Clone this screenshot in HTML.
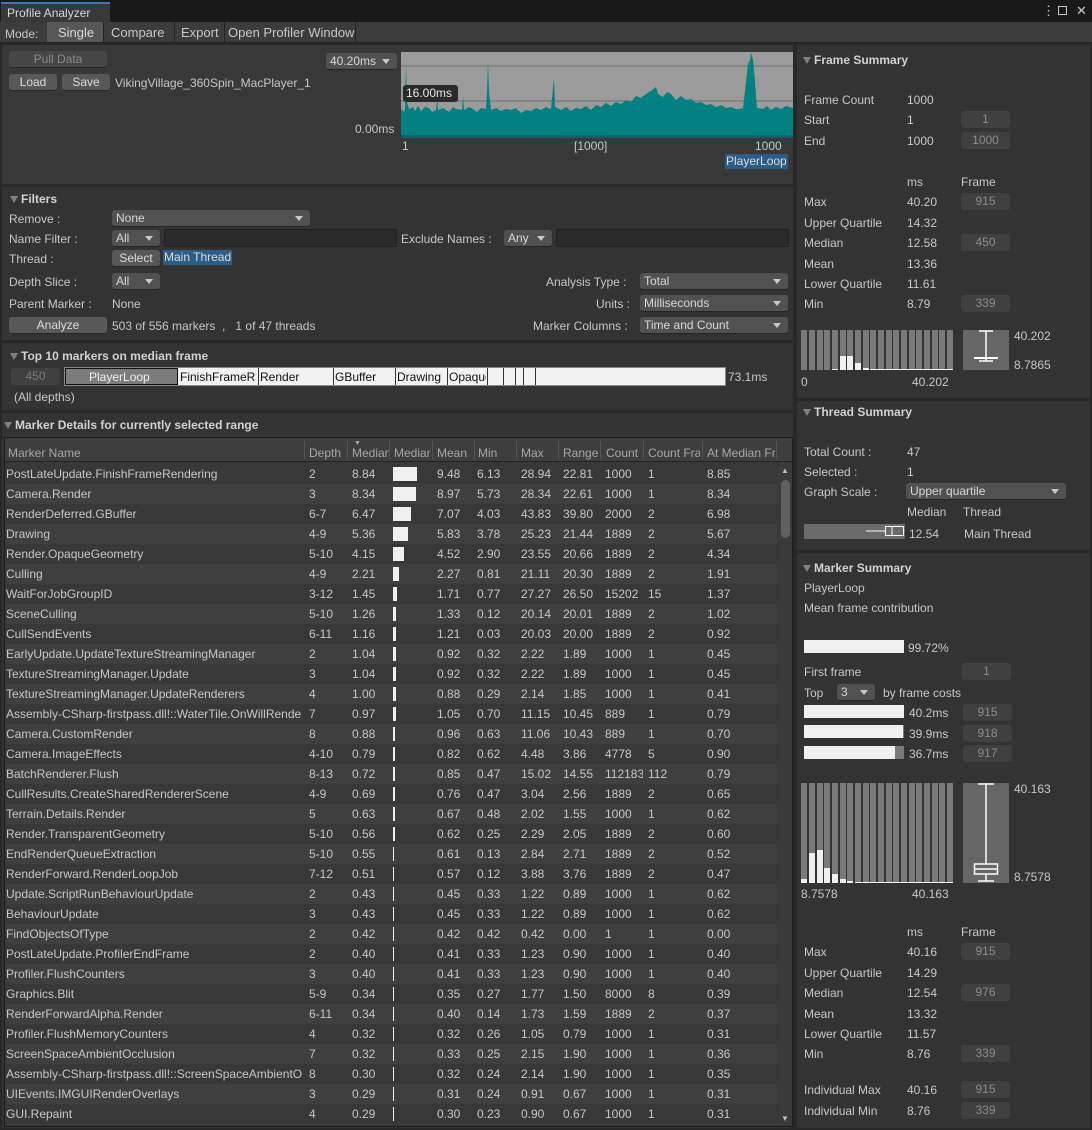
<!DOCTYPE html>
<html><head><meta charset="utf-8"><style>
*{margin:0;padding:0;box-sizing:border-box}
body{width:1092px;height:1130px;background:#282828;font-family:"Liberation Sans",sans-serif;font-size:12px;color:#c8c8c8;position:relative;overflow:hidden}
.a{position:absolute;white-space:nowrap;line-height:14px}
.box{position:absolute}
.sec{position:absolute;background:#333333}
.btn{position:absolute;background:#585858;border-radius:3px;color:#dcdcdc;text-align:center;line-height:16px;height:17px;border-bottom:1px solid #242424}
.dd{position:absolute;background:#515151;border-radius:3px;color:#d8d8d8;line-height:16px;height:17px;padding-left:4px;border-bottom:1px solid #242424}
.dd:after{content:"";position:absolute;right:7px;top:6px;border-left:4px solid transparent;border-right:4px solid transparent;border-top:5px solid #c8c8c8}
.tf{position:absolute;background:#2a2a2a;border:1px solid #212121;border-radius:2px;height:18px}
.fb{position:absolute;background:#404040;border-radius:3px;color:#8c8c8c;text-align:center;line-height:16px;height:17px;width:49px}
.hd{position:absolute;font-weight:bold;color:#d2d2d2;line-height:14px;white-space:nowrap}
.hd:before{content:"";display:inline-block;border-left:4px solid transparent;border-right:4px solid transparent;border-top:7px solid #808080;margin-right:3px;vertical-align:0}
.r{position:absolute;left:6px;width:771px;height:20px;line-height:20px}
.r:nth-child(odd){background:#383838}
.r:nth-child(even){background:#3f3f3f}
.r i{font-style:normal;position:absolute;top:0;overflow:hidden;white-space:nowrap}
.r b{position:absolute;top:3px;height:14px;background:#f0f0f0;left:387px}
.c0{left:0;width:296px}.c1{left:303px;width:40px}.c2{left:346px;width:40px}.c3{left:431px;width:40px}.c4{left:471px;width:40px}.c5{left:515px;width:40px}.c6{left:557px;width:40px}.c7{left:599px;width:38px}.c8{left:642px;width:52px}.c9{left:701px;width:70px}
</style></head><body>

<!-- title bar -->
<div class="box" style="left:0;top:0;width:1092px;height:22px;background:#191919"></div>
<div class="box" style="left:1px;top:2px;width:109px;height:20px;background:#383838;border-top:2px solid #3a79bb"></div>
<div class="a" style="left:7px;top:6px;color:#d8d8d8">Profile Analyzer</div>
<div class="a" style="left:1042px;top:4px;color:#c8c8c8;font-size:13px">⋮</div>
<div class="box" style="left:1058px;top:6px;width:9px;height:9px;border:1px solid #c8c8c8"></div>
<div class="a" style="left:1076px;top:4px;color:#c8c8c8;font-size:13px">✕</div>

<!-- toolbar -->
<div class="box" style="left:0;top:22px;width:1092px;height:21px;background:#3c3c3c;border-bottom:1px solid #232323"></div>
<div class="a" style="left:5px;top:27px;color:#c8c8c8">Mode:</div>
<div class="box" style="left:47px;top:22px;width:57px;height:20px;background:#575757;border-right:1px solid #232323"></div>
<div class="a" style="left:58px;top:26px;color:#d8d8d8;font-size:13px">Single</div>
<div class="box" style="left:104px;top:22px;width:71px;height:20px;border-right:1px solid #232323"></div>
<div class="a" style="left:111px;top:26px;font-size:13px">Compare</div>
<div class="box" style="left:175px;top:22px;width:50px;height:20px;border-right:1px solid #232323"></div>
<div class="a" style="left:181px;top:26px;font-size:13px">Export</div>
<div class="box" style="left:225px;top:22px;width:131px;height:20px;border-right:1px solid #232323"></div>
<div class="a" style="left:228px;top:26px;font-size:13px">Open Profiler Window</div>

<!-- left sections -->
<div class="sec" style="left:2px;top:45px;width:791px;height:139px;background:#383838"></div>
<div class="sec" style="left:2px;top:187px;width:791px;height:153px"></div>
<div class="sec" style="left:2px;top:343px;width:791px;height:67px"></div>
<div class="sec" style="left:2px;top:413px;width:791px;height:715px"></div>

<!-- top section -->
<div class="btn" style="left:9px;top:51px;width:98px;background:#464646;color:#8a8a8a">Pull Data</div>
<div class="btn" style="left:9px;top:74px;width:48px">Load</div>
<div class="btn" style="left:62px;top:74px;width:48px">Save</div>
<div class="a" style="left:115px;top:76px;color:#c8c8c8;width:198px;overflow:hidden">VikingVillage_360Spin_MacPlayer_1</div>
<div class="dd" style="left:326px;top:53px;width:71px">40.20ms</div>
<div class="a" style="left:355px;top:122px">0.00ms</div>
<svg class="box" style="left:401px;top:52px" width="392" height="86" viewBox="0 0 392 86">
<rect width="392" height="86" fill="#9b9b9b"/>
<line x1="0" y1="14" x2="392" y2="14" stroke="#6c6c6c"/>
<line x1="0" y1="49" x2="392" y2="49" stroke="#6c6c6c"/>
<path fill="#008080" d="M0,86 L0,57 L3,60 L4,56 L5,14 L6,50 L8,57 L12,55 L14,59 L17,54 L20,59 L24,55 L28,56 L31,60 L35,58 L36,48 L37,58 L42,56 L48,60 L52,55 L55,57 L61,58 L62,44 L63,58 L68,55 L72,57 L76,60 L80,56 L85,57 L86,40 L87,12 L88,40 L90,58 L95,56 L100,59 L105,57 L110,58 L115,56 L120,61 L125,58 L130,59 L135,56 L140,58 L145,55 L150,57 L153,26 L154,55 L160,58 L165,55 L170,59 L175,56 L180,57 L185,54 L190,58 L195,53 L200,55 L205,51 L210,54 L215,50 L220,52 L225,48 L230,50 L235,44 L240,46 L245,42 L250,39 L255,35 L257,42 L262,45 L266,40 L270,42 L275,48 L280,44 L285,48 L290,47 L295,51 L300,50 L305,53 L310,52 L315,55 L320,53 L325,56 L330,55 L335,57 L338,57 L342,56 L345,30 L347,12 L349,8 L350,0 L352,8 L354,30 L356,56 L362,57 L366,54 L370,58 L375,55 L380,57 L385,54 L392,56 L392,86 Z"/>
<rect y="83" width="392" height="3" fill="#006868"/>
<rect x="2" y="33" width="55" height="17" rx="3" fill="#2a2a2a"/>
<text x="5" y="45" font-family="Liberation Sans" font-size="12" fill="#e8e8e8">16.00ms</text>
</svg>
<div class="a" style="left:402px;top:139px">1</div>
<div class="a" style="left:574px;top:139px">[1000]</div>
<div class="a" style="left:755px;top:139px">1000</div>
<div class="a" style="left:725px;top:154px;background:#2c5d87;color:#dcdcdc;padding:0 1px;line-height:15px">PlayerLoop</div>

<!-- Filters -->
<div class="hd" style="left:10px;top:192px">Filters</div>
<div class="a" style="left:9px;top:212px">Remove :</div>
<div class="dd" style="left:112px;top:210px;width:198px">None</div>
<div class="a" style="left:9px;top:232px">Name Filter :</div>
<div class="dd" style="left:112px;top:230px;width:48px">All</div>
<div class="tf" style="left:164px;top:229px;width:233px"></div>
<div class="a" style="left:401px;top:232px">Exclude Names :</div>
<div class="dd" style="left:504px;top:230px;width:48px">Any</div>
<div class="tf" style="left:556px;top:229px;width:233px"></div>
<div class="a" style="left:9px;top:252px">Thread :</div>
<div class="btn" style="left:112px;top:250px;width:48px">Select</div>
<div class="a" style="left:163px;top:250px;background:#2c5d87;color:#dcdcdc;padding:0 1px;line-height:15px">Main Thread</div>
<div class="a" style="left:9px;top:275px">Depth Slice :</div>
<div class="dd" style="left:112px;top:273px;width:48px">All</div>
<div class="a" style="left:546px;top:275px">Analysis Type :</div>
<div class="dd" style="left:640px;top:273px;width:148px">Total</div>
<div class="a" style="left:9px;top:297px">Parent Marker :</div>
<div class="a" style="left:112px;top:297px">None</div>
<div class="a" style="left:596px;top:297px">Units :</div>
<div class="dd" style="left:640px;top:295px;width:148px">Milliseconds</div>
<div class="btn" style="left:9px;top:317px;width:98px">Analyze</div>
<div class="a" style="left:112px;top:319px">503 of 556 markers &nbsp;, &nbsp; 1 of 47 threads</div>
<div class="a" style="left:533px;top:319px">Marker Columns :</div>
<div class="dd" style="left:640px;top:317px;width:148px">Time and Count</div>

<!-- Top 10 -->
<div class="hd" style="left:10px;top:349px">Top 10 markers on median frame</div>
<div class="fb" style="left:11px;top:368px;color:#7a7a7a">450</div>
<div class="box" style="left:64px;top:367px;width:662px;height:19px;background:#f2f2f2;border:1px solid #8a8a8a"></div>
<div class="box" style="left:65px;top:368px;width:113px;height:17px;background:#7c7c7c;border:1px solid #111"></div>
<div class="a" style="left:89px;top:370px;color:#f0f0f0">PlayerLoop</div>
<div class="a" style="left:180px;top:370px;color:#111;width:77px;overflow:hidden">FinishFrameR</div>
<div class="box" style="left:258px;top:368px;width:1px;height:17px;background:#333"></div>
<div class="a" style="left:260px;top:370px;color:#111">Render</div>
<div class="box" style="left:333px;top:368px;width:1px;height:17px;background:#333"></div>
<div class="a" style="left:335px;top:370px;color:#111">GBuffer</div>
<div class="box" style="left:395px;top:368px;width:1px;height:17px;background:#333"></div>
<div class="a" style="left:397px;top:370px;color:#111">Drawing</div>
<div class="box" style="left:447px;top:368px;width:1px;height:17px;background:#333"></div>
<div class="a" style="left:449px;top:370px;color:#111;width:37px;overflow:hidden">Opaque</div>
<div class="box" style="left:487px;top:368px;width:1px;height:17px;background:#333"></div>
<div class="box" style="left:503px;top:368px;width:1px;height:17px;background:#333"></div>
<div class="box" style="left:515px;top:368px;width:1px;height:17px;background:#333"></div>
<div class="box" style="left:523px;top:368px;width:1px;height:17px;background:#333"></div>
<div class="box" style="left:535px;top:368px;width:1px;height:17px;background:#333"></div>
<div class="a" style="left:728px;top:370px">73.1ms</div>
<div class="a" style="left:14px;top:390px">(All depths)</div>

<!-- Marker details -->
<div class="hd" style="left:4px;top:418px">Marker Details for currently selected range</div>
<div class="box" style="left:4px;top:437px;width:789px;height:690px;background:#383838;border:1px solid #1c1c1c"></div>
<div class="box" style="left:5px;top:438px;width:787px;height:24px;background:#3e3e3e;border-bottom:1px solid #232323"></div>
<div class="a" style="left:8px;top:446px;color:#a8a8a8">Marker Name</div>
<div class="a" style="left:309px;top:446px;color:#a8a8a8">Depth</div>
<div class="a" style="left:352px;top:446px;color:#a8a8a8;width:38px;overflow:hidden">Median</div>
<div class="a" style="left:354px;top:437px;color:#a8a8a8;font-size:7px">▼</div>
<div class="a" style="left:394px;top:446px;color:#a8a8a8;width:36px;overflow:hidden">Median</div>
<div class="a" style="left:437px;top:446px;color:#a8a8a8">Mean</div>
<div class="a" style="left:478px;top:446px;color:#a8a8a8">Min</div>
<div class="a" style="left:521px;top:446px;color:#a8a8a8">Max</div>
<div class="a" style="left:563px;top:446px;color:#a8a8a8;width:37px;overflow:hidden">Range</div>
<div class="a" style="left:606px;top:446px;color:#a8a8a8">Count</div>
<div class="a" style="left:648px;top:446px;color:#a8a8a8;width:52px;overflow:hidden">Count Frame</div>
<div class="a" style="left:707px;top:446px;color:#a8a8a8;width:68px;overflow:hidden">At Median Frame</div>
<div class="box" style="left:304px;top:441px;width:1px;height:18px;background:#555"></div>
<div class="box" style="left:347px;top:441px;width:1px;height:18px;background:#555"></div>
<div class="box" style="left:389px;top:441px;width:1px;height:18px;background:#555"></div>
<div class="box" style="left:432px;top:441px;width:1px;height:18px;background:#555"></div>
<div class="box" style="left:474px;top:441px;width:1px;height:18px;background:#555"></div>
<div class="box" style="left:516px;top:441px;width:1px;height:18px;background:#555"></div>
<div class="box" style="left:558px;top:441px;width:1px;height:18px;background:#555"></div>
<div class="box" style="left:600px;top:441px;width:1px;height:18px;background:#555"></div>
<div class="box" style="left:643px;top:441px;width:1px;height:18px;background:#555"></div>
<div class="box" style="left:702px;top:441px;width:1px;height:18px;background:#555"></div>
<div class="box" style="left:776px;top:441px;width:1px;height:18px;background:#555"></div>
<!-- scrollbar -->
<div class="box" style="left:778px;top:463px;width:14px;height:663px;background:#3a3a3a"></div>
<div class="a" style="left:781px;top:464px;font-size:8px;color:#c0c0c0">▲</div>
<div class="box" style="left:781px;top:480px;width:9px;height:58px;background:#5f5f5f;border-radius:5px"></div>
<div class="a" style="left:781px;top:1112px;font-size:8px;color:#c0c0c0">▼</div>

<div class="box" style="left:0;top:464px;width:778px;height:662px;overflow:hidden">
<div class="r" style="top:0"><i class="c0">PostLateUpdate.FinishFrameRendering</i><i class="c1">2</i><i class="c2">8.84</i><b style="width:24px"></b><i class="c3">9.48</i><i class="c4">6.13</i><i class="c5">28.94</i><i class="c6">22.81</i><i class="c7">1000</i><i class="c8">1</i><i class="c9">8.85</i></div>
<div class="r" style="top:20px"><i class="c0">Camera.Render</i><i class="c1">3</i><i class="c2">8.34</i><b style="width:23px"></b><i class="c3">8.97</i><i class="c4">5.73</i><i class="c5">28.34</i><i class="c6">22.61</i><i class="c7">1000</i><i class="c8">1</i><i class="c9">8.34</i></div>
<div class="r" style="top:40px"><i class="c0">RenderDeferred.GBuffer</i><i class="c1">6-7</i><i class="c2">6.47</i><b style="width:18px"></b><i class="c3">7.07</i><i class="c4">4.03</i><i class="c5">43.83</i><i class="c6">39.80</i><i class="c7">2000</i><i class="c8">2</i><i class="c9">6.98</i></div>
<div class="r" style="top:60px"><i class="c0">Drawing</i><i class="c1">4-9</i><i class="c2">5.36</i><b style="width:15px"></b><i class="c3">5.83</i><i class="c4">3.78</i><i class="c5">25.23</i><i class="c6">21.44</i><i class="c7">1889</i><i class="c8">2</i><i class="c9">5.67</i></div>
<div class="r" style="top:80px"><i class="c0">Render.OpaqueGeometry</i><i class="c1">5-10</i><i class="c2">4.15</i><b style="width:11px"></b><i class="c3">4.52</i><i class="c4">2.90</i><i class="c5">23.55</i><i class="c6">20.66</i><i class="c7">1889</i><i class="c8">2</i><i class="c9">4.34</i></div>
<div class="r" style="top:100px"><i class="c0">Culling</i><i class="c1">4-9</i><i class="c2">2.21</i><b style="width:6px"></b><i class="c3">2.27</i><i class="c4">0.81</i><i class="c5">21.11</i><i class="c6">20.30</i><i class="c7">1889</i><i class="c8">2</i><i class="c9">1.91</i></div>
<div class="r" style="top:120px"><i class="c0">WaitForJobGroupID</i><i class="c1">3-12</i><i class="c2">1.45</i><b style="width:4px"></b><i class="c3">1.71</i><i class="c4">0.77</i><i class="c5">27.27</i><i class="c6">26.50</i><i class="c7">15202</i><i class="c8">15</i><i class="c9">1.37</i></div>
<div class="r" style="top:140px"><i class="c0">SceneCulling</i><i class="c1">5-10</i><i class="c2">1.26</i><b style="width:3px"></b><i class="c3">1.33</i><i class="c4">0.12</i><i class="c5">20.14</i><i class="c6">20.01</i><i class="c7">1889</i><i class="c8">2</i><i class="c9">1.02</i></div>
<div class="r" style="top:160px"><i class="c0">CullSendEvents</i><i class="c1">6-11</i><i class="c2">1.16</i><b style="width:3px"></b><i class="c3">1.21</i><i class="c4">0.03</i><i class="c5">20.03</i><i class="c6">20.00</i><i class="c7">1889</i><i class="c8">2</i><i class="c9">0.92</i></div>
<div class="r" style="top:180px"><i class="c0">EarlyUpdate.UpdateTextureStreamingManager</i><i class="c1">2</i><i class="c2">1.04</i><b style="width:3px"></b><i class="c3">0.92</i><i class="c4">0.32</i><i class="c5">2.22</i><i class="c6">1.89</i><i class="c7">1000</i><i class="c8">1</i><i class="c9">0.45</i></div>
<div class="r" style="top:200px"><i class="c0">TextureStreamingManager.Update</i><i class="c1">3</i><i class="c2">1.04</i><b style="width:3px"></b><i class="c3">0.92</i><i class="c4">0.32</i><i class="c5">2.22</i><i class="c6">1.89</i><i class="c7">1000</i><i class="c8">1</i><i class="c9">0.45</i></div>
<div class="r" style="top:220px"><i class="c0">TextureStreamingManager.UpdateRenderers</i><i class="c1">4</i><i class="c2">1.00</i><b style="width:3px"></b><i class="c3">0.88</i><i class="c4">0.29</i><i class="c5">2.14</i><i class="c6">1.85</i><i class="c7">1000</i><i class="c8">1</i><i class="c9">0.41</i></div>
<div class="r" style="top:240px"><i class="c0">Assembly-CSharp-firstpass.dll!::WaterTile.OnWillRenderObject</i><i class="c1">7</i><i class="c2">0.97</i><b style="width:3px"></b><i class="c3">1.05</i><i class="c4">0.70</i><i class="c5">11.15</i><i class="c6">10.45</i><i class="c7">889</i><i class="c8">1</i><i class="c9">0.79</i></div>
<div class="r" style="top:260px"><i class="c0">Camera.CustomRender</i><i class="c1">8</i><i class="c2">0.88</i><b style="width:2px"></b><i class="c3">0.96</i><i class="c4">0.63</i><i class="c5">11.06</i><i class="c6">10.43</i><i class="c7">889</i><i class="c8">1</i><i class="c9">0.70</i></div>
<div class="r" style="top:280px"><i class="c0">Camera.ImageEffects</i><i class="c1">4-10</i><i class="c2">0.79</i><b style="width:2px"></b><i class="c3">0.82</i><i class="c4">0.62</i><i class="c5">4.48</i><i class="c6">3.86</i><i class="c7">4778</i><i class="c8">5</i><i class="c9">0.90</i></div>
<div class="r" style="top:300px"><i class="c0">BatchRenderer.Flush</i><i class="c1">8-13</i><i class="c2">0.72</i><b style="width:2px"></b><i class="c3">0.85</i><i class="c4">0.47</i><i class="c5">15.02</i><i class="c6">14.55</i><i class="c7">112183</i><i class="c8">112</i><i class="c9">0.79</i></div>
<div class="r" style="top:320px"><i class="c0">CullResults.CreateSharedRendererScene</i><i class="c1">4-9</i><i class="c2">0.69</i><b style="width:2px"></b><i class="c3">0.76</i><i class="c4">0.47</i><i class="c5">3.04</i><i class="c6">2.56</i><i class="c7">1889</i><i class="c8">2</i><i class="c9">0.65</i></div>
<div class="r" style="top:340px"><i class="c0">Terrain.Details.Render</i><i class="c1">5</i><i class="c2">0.63</i><b style="width:2px"></b><i class="c3">0.67</i><i class="c4">0.48</i><i class="c5">2.02</i><i class="c6">1.55</i><i class="c7">1000</i><i class="c8">1</i><i class="c9">0.62</i></div>
<div class="r" style="top:360px"><i class="c0">Render.TransparentGeometry</i><i class="c1">5-10</i><i class="c2">0.56</i><b style="width:2px"></b><i class="c3">0.62</i><i class="c4">0.25</i><i class="c5">2.29</i><i class="c6">2.05</i><i class="c7">1889</i><i class="c8">2</i><i class="c9">0.60</i></div>
<div class="r" style="top:380px"><i class="c0">EndRenderQueueExtraction</i><i class="c1">5-10</i><i class="c2">0.55</i><b style="width:1px"></b><i class="c3">0.61</i><i class="c4">0.13</i><i class="c5">2.84</i><i class="c6">2.71</i><i class="c7">1889</i><i class="c8">2</i><i class="c9">0.52</i></div>
<div class="r" style="top:400px"><i class="c0">RenderForward.RenderLoopJob</i><i class="c1">7-12</i><i class="c2">0.51</i><b style="width:1px"></b><i class="c3">0.57</i><i class="c4">0.12</i><i class="c5">3.88</i><i class="c6">3.76</i><i class="c7">1889</i><i class="c8">2</i><i class="c9">0.47</i></div>
<div class="r" style="top:420px"><i class="c0">Update.ScriptRunBehaviourUpdate</i><i class="c1">2</i><i class="c2">0.43</i><b style="width:1px"></b><i class="c3">0.45</i><i class="c4">0.33</i><i class="c5">1.22</i><i class="c6">0.89</i><i class="c7">1000</i><i class="c8">1</i><i class="c9">0.62</i></div>
<div class="r" style="top:440px"><i class="c0">BehaviourUpdate</i><i class="c1">3</i><i class="c2">0.43</i><b style="width:1px"></b><i class="c3">0.45</i><i class="c4">0.33</i><i class="c5">1.22</i><i class="c6">0.89</i><i class="c7">1000</i><i class="c8">1</i><i class="c9">0.62</i></div>
<div class="r" style="top:460px"><i class="c0">FindObjectsOfType</i><i class="c1">2</i><i class="c2">0.42</i><b style="width:1px"></b><i class="c3">0.42</i><i class="c4">0.42</i><i class="c5">0.42</i><i class="c6">0.00</i><i class="c7">1</i><i class="c8">1</i><i class="c9">0.00</i></div>
<div class="r" style="top:480px"><i class="c0">PostLateUpdate.ProfilerEndFrame</i><i class="c1">2</i><i class="c2">0.40</i><b style="width:1px"></b><i class="c3">0.41</i><i class="c4">0.33</i><i class="c5">1.23</i><i class="c6">0.90</i><i class="c7">1000</i><i class="c8">1</i><i class="c9">0.40</i></div>
<div class="r" style="top:500px"><i class="c0">Profiler.FlushCounters</i><i class="c1">3</i><i class="c2">0.40</i><b style="width:1px"></b><i class="c3">0.41</i><i class="c4">0.33</i><i class="c5">1.23</i><i class="c6">0.90</i><i class="c7">1000</i><i class="c8">1</i><i class="c9">0.40</i></div>
<div class="r" style="top:520px"><i class="c0">Graphics.Blit</i><i class="c1">5-9</i><i class="c2">0.34</i><b style="width:1px"></b><i class="c3">0.35</i><i class="c4">0.27</i><i class="c5">1.77</i><i class="c6">1.50</i><i class="c7">8000</i><i class="c8">8</i><i class="c9">0.39</i></div>
<div class="r" style="top:540px"><i class="c0">RenderForwardAlpha.Render</i><i class="c1">6-11</i><i class="c2">0.34</i><b style="width:1px"></b><i class="c3">0.40</i><i class="c4">0.14</i><i class="c5">1.73</i><i class="c6">1.59</i><i class="c7">1889</i><i class="c8">2</i><i class="c9">0.37</i></div>
<div class="r" style="top:560px"><i class="c0">Profiler.FlushMemoryCounters</i><i class="c1">4</i><i class="c2">0.32</i><b style="width:1px"></b><i class="c3">0.32</i><i class="c4">0.26</i><i class="c5">1.05</i><i class="c6">0.79</i><i class="c7">1000</i><i class="c8">1</i><i class="c9">0.31</i></div>
<div class="r" style="top:580px"><i class="c0">ScreenSpaceAmbientOcclusion</i><i class="c1">7</i><i class="c2">0.32</i><b style="width:1px"></b><i class="c3">0.33</i><i class="c4">0.25</i><i class="c5">2.15</i><i class="c6">1.90</i><i class="c7">1000</i><i class="c8">1</i><i class="c9">0.36</i></div>
<div class="r" style="top:600px"><i class="c0">Assembly-CSharp-firstpass.dll!::ScreenSpaceAmbientOcclusion</i><i class="c1">8</i><i class="c2">0.30</i><b style="width:1px"></b><i class="c3">0.32</i><i class="c4">0.24</i><i class="c5">2.14</i><i class="c6">1.90</i><i class="c7">1000</i><i class="c8">1</i><i class="c9">0.35</i></div>
<div class="r" style="top:620px"><i class="c0">UIEvents.IMGUIRenderOverlays</i><i class="c1">3</i><i class="c2">0.29</i><b style="width:1px"></b><i class="c3">0.31</i><i class="c4">0.24</i><i class="c5">0.91</i><i class="c6">0.67</i><i class="c7">1000</i><i class="c8">1</i><i class="c9">0.31</i></div>
<div class="r" style="top:640px"><i class="c0">GUI.Repaint</i><i class="c1">4</i><i class="c2">0.29</i><b style="width:1px"></b><i class="c3">0.30</i><i class="c4">0.23</i><i class="c5">0.90</i><i class="c6">0.67</i><i class="c7">1000</i><i class="c8">1</i><i class="c9">0.31</i></div>
</div>

<!-- right panel -->
<div class="sec" style="left:797px;top:45px;width:293px;height:353px"></div>
<div class="sec" style="left:797px;top:401px;width:293px;height:149px"></div>
<div class="sec" style="left:797px;top:553px;width:293px;height:575px"></div>

<div class="hd" style="left:803px;top:53px">Frame Summary</div>
<div class="a" style="left:804px;top:93px">Frame Count</div><div class="a" style="left:907px;top:93px">1000</div>
<div class="a" style="left:804px;top:113px">Start</div><div class="a" style="left:907px;top:113px">1</div><div class="fb" style="left:961px;top:111px">1</div>
<div class="a" style="left:804px;top:134px">End</div><div class="a" style="left:907px;top:134px">1000</div><div class="fb" style="left:961px;top:132px">1000</div>
<div class="a" style="left:907px;top:175px">ms</div><div class="a" style="left:961px;top:175px">Frame</div>
<div class="a" style="left:804px;top:195px">Max</div><div class="a" style="left:907px;top:195px">40.20</div><div class="fb" style="left:961px;top:193px">915</div>
<div class="a" style="left:804px;top:216px">Upper Quartile</div><div class="a" style="left:907px;top:216px">14.32</div>
<div class="a" style="left:804px;top:236px">Median</div><div class="a" style="left:907px;top:236px">12.58</div><div class="fb" style="left:961px;top:234px">450</div>
<div class="a" style="left:804px;top:257px">Mean</div><div class="a" style="left:907px;top:257px">13.36</div>
<div class="a" style="left:804px;top:277px">Lower Quartile</div><div class="a" style="left:907px;top:277px">11.61</div>
<div class="a" style="left:804px;top:297px">Min</div><div class="a" style="left:907px;top:297px">8.79</div><div class="fb" style="left:961px;top:295px">339</div>
<svg class="box" style="left:801px;top:330px" width="154" height="43">
<g fill="#7a7a7a">
<rect x="0" width="6" height="40"/><rect x="8" width="6" height="40"/><rect x="16" width="6" height="40"/><rect x="23" width="6" height="40"/><rect x="31" width="6" height="40"/><rect x="39" width="6" height="40"/><rect x="46" width="6" height="40"/><rect x="54" width="6" height="40"/><rect x="62" width="6" height="40"/><rect x="69" width="6" height="40"/><rect x="77" width="6" height="40"/><rect x="85" width="6" height="40"/><rect x="92" width="6" height="40"/><rect x="100" width="6" height="40"/><rect x="108" width="6" height="40"/><rect x="115" width="6" height="40"/><rect x="123" width="6" height="40"/><rect x="131" width="6" height="40"/><rect x="138" width="6" height="40"/><rect x="146" width="6" height="40"/></g>
<g fill="#f0f0f0"><rect x="31" y="39" width="6" height="1"/><rect x="39" y="26" width="6" height="14"/><rect x="46" y="26" width="6" height="14"/><rect x="54" y="33" width="6" height="7"/><rect x="62" y="38" width="6" height="2"/><rect x="69" y="39" width="83" height="1"/></g>
</svg>
<svg class="box" style="left:963px;top:330px" width="46" height="40">
<rect width="46" height="40" fill="#666"/>
<g stroke="#fff" stroke-width="1.5" fill="none"><line x1="16" y1="1" x2="30" y2="1"/><line x1="23" y1="1" x2="23" y2="31"/><line x1="11" y1="28" x2="35" y2="28" stroke-width="2"/><line x1="16" y1="31" x2="30" y2="31"/></g>
</svg>
<div class="a" style="left:1014px;top:329px">40.202</div>
<div class="a" style="left:1014px;top:358px">8.7865</div>
<div class="a" style="left:801px;top:375px">0</div>
<div class="a" style="left:912px;top:375px">40.202</div>

<div class="hd" style="left:803px;top:405px">Thread Summary</div>
<div class="a" style="left:804px;top:445px">Total Count :</div><div class="a" style="left:907px;top:445px">47</div>
<div class="a" style="left:804px;top:465px">Selected :</div><div class="a" style="left:907px;top:465px">1</div>
<div class="a" style="left:804px;top:485px">Graph Scale :</div>
<div class="dd" style="left:906px;top:483px;width:160px">Upper quartile</div>
<div class="a" style="left:907px;top:505px">Median</div><div class="a" style="left:963px;top:505px">Thread</div>
<svg class="box" style="left:804px;top:524px" width="101" height="16"><rect width="101" height="15" fill="#6b6b6b"/><g stroke="#fff" fill="none"><line x1="62" y1="7" x2="81" y2="7"/><rect x="81.5" y="2.5" width="18" height="9"/><line x1="88" y1="3" x2="88" y2="11"/></g></svg>
<div class="a" style="left:909px;top:527px">12.54</div>
<div class="a" style="left:964px;top:527px">Main Thread</div>

<div class="hd" style="left:803px;top:561px">Marker Summary</div>
<div class="a" style="left:804px;top:581px">PlayerLoop</div>
<div class="a" style="left:804px;top:601px">Mean frame contribution</div>
<div class="box" style="left:804px;top:640px;width:100px;height:13px;background:#f0f0f0"></div>
<div class="a" style="left:908px;top:641px">99.72%</div>
<div class="a" style="left:804px;top:665px">First frame</div><div class="fb" style="left:962px;top:663px">1</div>
<div class="a" style="left:804px;top:686px">Top</div>
<div class="dd" style="left:837px;top:684px;width:38px">3</div>
<div class="a" style="left:883px;top:686px">by frame costs</div>
<div class="box" style="left:804px;top:705px;width:100px;height:13px;background:#f0f0f0"></div>
<div class="a" style="left:909px;top:706px">40.2ms</div><div class="fb" style="left:963px;top:704px">915</div>
<div class="box" style="left:804px;top:725px;width:100px;height:13px;background:#7a7a7a"></div>
<div class="box" style="left:804px;top:725px;width:99px;height:13px;background:#f0f0f0"></div>
<div class="a" style="left:909px;top:727px">39.9ms</div><div class="fb" style="left:963px;top:725px">918</div>
<div class="box" style="left:804px;top:746px;width:100px;height:13px;background:#7a7a7a"></div>
<div class="box" style="left:804px;top:746px;width:91px;height:13px;background:#f0f0f0"></div>
<div class="a" style="left:909px;top:747px">36.7ms</div><div class="fb" style="left:963px;top:745px">917</div>

<svg class="box" style="left:801px;top:783px" width="154" height="100">
<g fill="#7a7a7a">
<rect x="0" width="6" height="100"/><rect x="8" width="6" height="100"/><rect x="16" width="6" height="100"/><rect x="23" width="6" height="100"/><rect x="31" width="6" height="100"/><rect x="39" width="6" height="100"/><rect x="46" width="6" height="100"/><rect x="54" width="6" height="100"/><rect x="62" width="6" height="100"/><rect x="69" width="6" height="100"/><rect x="77" width="6" height="100"/><rect x="85" width="6" height="100"/><rect x="92" width="6" height="100"/><rect x="100" width="6" height="100"/><rect x="108" width="6" height="100"/><rect x="115" width="6" height="100"/><rect x="123" width="6" height="100"/><rect x="131" width="6" height="100"/><rect x="138" width="6" height="100"/><rect x="146" width="6" height="100"/></g>
<g fill="#f0f0f0"><rect x="0" y="96" width="6" height="4"/><rect x="8" y="70" width="6" height="30"/><rect x="16" y="67" width="6" height="33"/><rect x="23" y="85" width="6" height="15"/><rect x="31" y="91" width="6" height="9"/><rect x="39" y="96" width="6" height="4"/><rect x="46" y="98" width="6" height="2"/><rect x="54" y="99" width="98" height="1"/></g>
</svg>
<svg class="box" style="left:963px;top:783px" width="46" height="100">
<rect width="46" height="100" fill="#666"/>
<g stroke="#fff" stroke-width="1.5" fill="none"><line x1="15" y1="1" x2="31" y2="1"/><line x1="23" y1="1" x2="23" y2="98"/><rect x="11.5" y="81" width="23" height="10" fill="#666"/><line x1="11" y1="86" x2="35" y2="86"/><line x1="15" y1="98" x2="31" y2="98"/></g>
</svg>
<div class="a" style="left:1014px;top:782px">40.163</div>
<div class="a" style="left:1014px;top:870px">8.7578</div>
<div class="a" style="left:801px;top:887px">8.7578</div>
<div class="a" style="left:912px;top:887px">40.163</div>

<div class="a" style="left:907px;top:925px">ms</div><div class="a" style="left:961px;top:925px">Frame</div>
<div class="a" style="left:804px;top:945px">Max</div><div class="a" style="left:907px;top:945px">40.16</div><div class="fb" style="left:961px;top:943px">915</div>
<div class="a" style="left:804px;top:966px">Upper Quartile</div><div class="a" style="left:907px;top:966px">14.29</div>
<div class="a" style="left:804px;top:986px">Median</div><div class="a" style="left:907px;top:986px">12.54</div><div class="fb" style="left:961px;top:984px">976</div>
<div class="a" style="left:804px;top:1007px">Mean</div><div class="a" style="left:907px;top:1007px">13.32</div>
<div class="a" style="left:804px;top:1027px">Lower Quartile</div><div class="a" style="left:907px;top:1027px">11.57</div>
<div class="a" style="left:804px;top:1047px">Min</div><div class="a" style="left:907px;top:1047px">8.76</div><div class="fb" style="left:961px;top:1045px">339</div>
<div class="a" style="left:804px;top:1083px">Individual Max</div><div class="a" style="left:907px;top:1083px">40.16</div><div class="fb" style="left:961px;top:1081px">915</div>
<div class="a" style="left:804px;top:1104px">Individual Min</div><div class="a" style="left:907px;top:1104px">8.76</div><div class="fb" style="left:961px;top:1102px">339</div>
</body></html>
